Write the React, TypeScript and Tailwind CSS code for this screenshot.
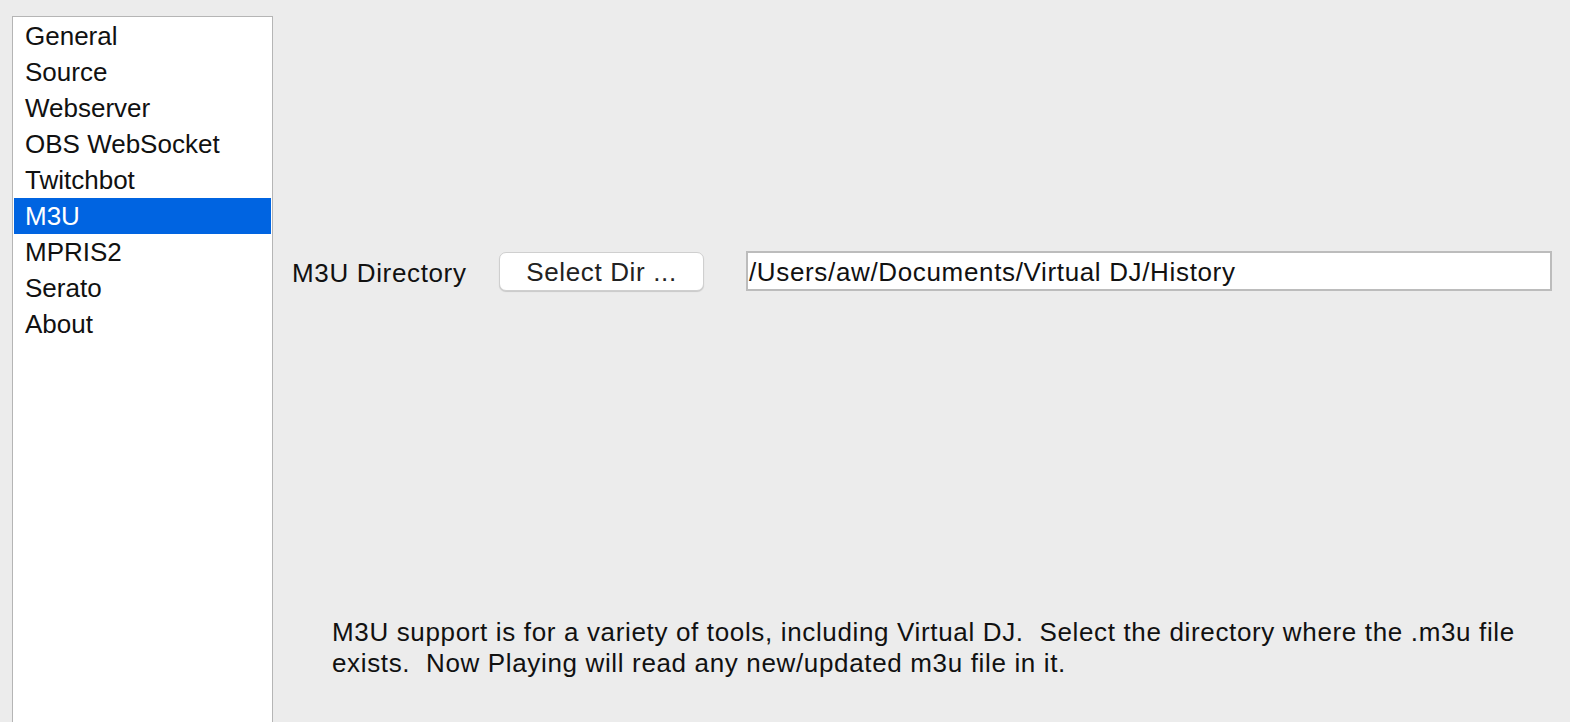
const items = ['General', 'Source', 'Webserver', 'OBS WebSocket', 'Twitchbot', 'M3U', 'MPRIS2', 'Serato', 'About'];

export default function App() {
  const selected = 'M3U';

  return (
    <div
      className="flex h-[722px] w-[1570px] overflow-hidden bg-[#ececec] pl-3 pt-4 text-[#111] text-[26px]"
      style={{ fontFamily: '"Liberation Sans", Arial, sans-serif' }}
    >
      {/* settings list */}
      <div className="h-[740px] w-[261px] shrink-0 border border-[#b5b5b5] bg-white p-px pt-[1px]">
        {items.map((item) => (
          <div
            key={item}
            className={
              item === selected
                ? 'flex h-9 items-center bg-[#0064e1] pl-[11px] pt-px text-white'
                : 'flex h-9 items-center pl-[11px] pt-px'
            }
          >
            {item}
          </div>
        ))}
      </div>

      {/* m3u page */}
      <div className="flex flex-1 flex-col tracking-[0.65px]">
        <div className="mt-[235px] flex items-center pl-[19px]">
          <span className="w-[207px] shrink-0 pt-[3px] leading-none">M3U Directory</span>
          <button className="h-[39px] w-[205px] shrink-0 rounded-[7px] border border-[#cfcfcf] bg-white pt-[2px] leading-none tracking-[0.65px] text-[#222] shadow-[0_1px_1px_rgba(0,0,0,0.15)]">
            Select Dir ...
          </button>
          <div className="ml-[42px] flex h-[40px] w-[806px] shrink-0 items-center border-2 border-[#bcbcbc] bg-white pl-[1px] pt-[2px] leading-none">
            /Users/aw/Documents/Virtual DJ/History
          </div>
        </div>

        <p className="mt-[326px] pl-[59px] leading-[31px]">
          M3U support is for a variety of tools, including Virtual DJ.&nbsp; Select the directory where the .m3u file
          <br />
          exists.&nbsp; Now Playing will read any new/updated m3u file in it.
        </p>
      </div>
    </div>
  );
}
